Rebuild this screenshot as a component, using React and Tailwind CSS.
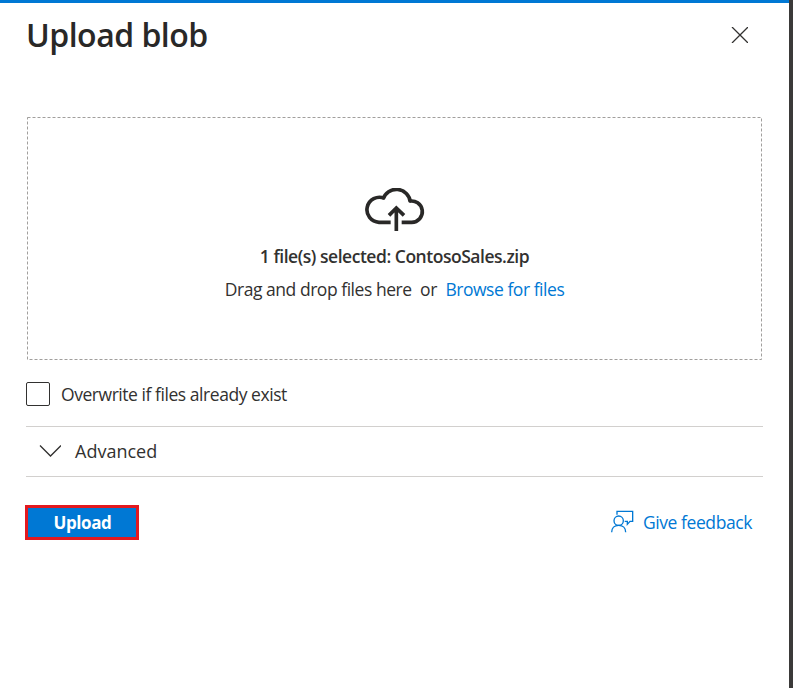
function CloudUpload() {
  return (
    <svg className="h-[44px] w-[60px]" viewBox="0 0 180 132" fill="none" stroke="#292827" strokeWidth="11">
      <path d="M77 103H42A37.5 37.5 0 1 1 58 31" />
      <path d="M54 34A42 42 0 0 1 136 42" />
      <path d="M132 40A32 32 0 1 1 140 103H110" />
      <path d="M94 129V58M72 82L94 60L117 82" />
    </svg>
  );
}

function Feedback() {
  return (
    <svg className="mb-[3px] h-[24px] w-[24px] shrink-0" viewBox="0 0 72 72" fill="none" stroke="#0078d4" strokeWidth="4">
      <circle cx="26" cy="35" r="14" />
      <path d="M5 70C5 58 13 49 26 49S47 58 47 70" />
      <path d="M21 17V7H68V37H60L52 46V37H44" />
    </svg>
  );
}

export default function App() {
  return (
    <div className="flex h-[688px] w-[793px] overflow-hidden bg-white font-['Open_Sans','Noto_Sans',sans-serif] text-[#323130]">
      <main className="flex w-[789px] shrink-0 flex-col border-t-[3px] border-[#0078d4]">
        <header className="flex h-[114px] items-start justify-between pr-[41px] pl-[26px]">
          <h1 className="mt-[10px] text-[32px] leading-[44px] font-semibold tracking-[-0.5px] whitespace-nowrap text-[#292827]">Upload blob</h1>
          <svg className="mt-[24px] h-[16px] w-[17px]" viewBox="0 0 17 16" fill="none" stroke="#323130" strokeWidth="1.3">
            <path d="M1 0L17 16M17 0L1 16" />
          </svg>
        </header>
        <section className="relative ml-[27px] flex h-[243px] w-[735px] flex-col items-center pt-[71px]">
          <svg className="absolute inset-0 h-full w-full" fill="none" stroke="#a19f9d">
            <rect x=".5" y=".5" width="734" height="242" strokeDasharray="3 2" />
          </svg>
          <CloudUpload />
          <p className="mt-[11px] text-[17.5px] leading-[26px] font-semibold tracking-[-0.47px] whitespace-nowrap">1 file(s) selected: ContosoSales.zip</p>
          <div className="mt-[7px] flex gap-[8.500px] text-[17.5px] leading-[26px] tracking-[-0.46px] whitespace-nowrap">
            <span>Drag and drop files here</span>
            <span>or</span>
            <a className="text-[#0078d4]">Browse for files</a>
          </div>
        </section>
        <label className="mt-[22px] ml-[26px] flex h-[24px] items-center gap-[11px]">
          <span className="h-[24px] w-[24px] rounded-[2px] border border-[#323130]" />
          <span className="text-[17.5px] tracking-[-0.45px] whitespace-nowrap">Overwrite if files already exist</span>
        </label>
        <section className="mt-[20px] ml-[26px] flex h-[51px] w-[737px] items-center gap-[14px] border-y border-[#d2d0ce] pl-[13px]">
          <svg className="mb-[2px] h-[12px] w-[22px]" viewBox="0 0 22 12" fill="none" stroke="#323130" strokeWidth="1.3">
            <path d="M1 .5L11.500 11L22 .5" />
          </svg>
          <span className="text-[18px]">Advanced</span>
        </section>
        <footer className="mt-[28px] ml-[25px] flex h-[35px] w-[727px] items-center justify-between">
          <button className="h-[35px] w-[114px] border-[3px] border-[#e3191f] bg-[#0078d4] pl-[1px] text-[17px] font-bold tracking-[-0.4px] text-white">Upload</button>
          <a className="flex items-center gap-[9px] text-[17.5px] tracking-[-0.42px] whitespace-nowrap text-[#0078d4]">
            <Feedback />
            <span>Give feedback</span>
          </a>
        </footer>
      </main>
      <div className="w-[4px] bg-[#3b3a39]" />
    </div>
  );
}
